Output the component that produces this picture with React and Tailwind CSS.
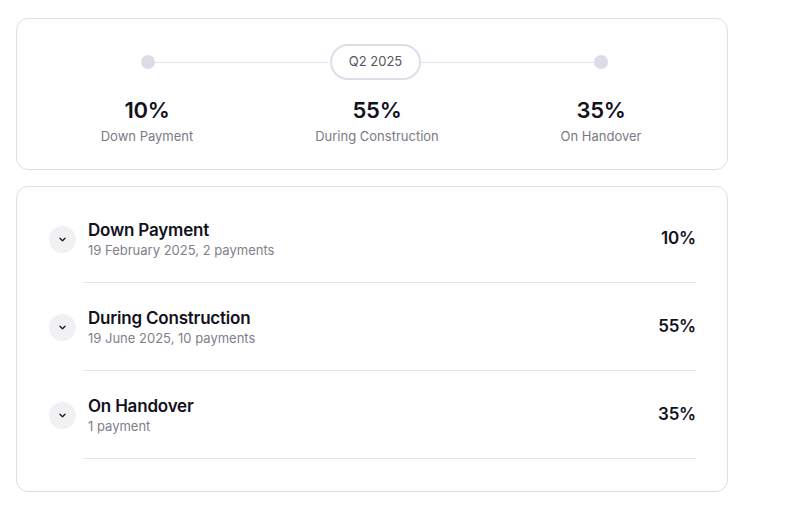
import React from 'react';

const SUMMARY = [
  { pct: '10%', label: 'Down Payment', pad: 'pl-[2px]' },
  { pct: '55%', label: 'During Construction', pad: 'pl-[10px]' },
  { pct: '35%', label: 'On Handover', pad: 'pl-[6px]' },
];

const STAGES = [
  { title: 'Down Payment', sub: '19 February 2025, 2 payments', pct: '10%' },
  { title: 'During Construction', sub: '19 June 2025, 10 payments', pct: '55%' },
  { title: 'On Handover', sub: '1 payment', pct: '35%' },
];

function Chevron() {
  return (
    <svg width="7" height="5" viewBox="0 0 7 5" fill="none">
      <path d="M1 1.2l2.5 2.5 2.5-2.5" stroke="#1a1a24" strokeWidth="1.3" strokeLinecap="round" strokeLinejoin="round" />
    </svg>
  );
}

export default function App() {
  return (
    <div className="w-[800px] h-[529px] bg-white pt-[18px] pl-4 font-['Inter',sans-serif] text-[#12121c]">
      <div className="w-[712px] rounded-xl border-[1.5px] border-[#dedde8] pt-[25px] pb-[24px]">
        <div className="flex items-center pl-[124px] pr-[119px]">
          <div className="w-[14px] h-[14px] rounded-full bg-[#dcdbe8]" />
          <div className="flex-1 h-px bg-[#e3e2ec]" />
          <div className="h-9 w-[91px] ml-[2px] rounded-full border-2 border-[#dedde8] flex items-center justify-center text-[13px] text-[#55555f]">
            Q2 2025
          </div>
          <div className="flex-1 h-px bg-[#e3e2ec]" />
          <div className="w-[14px] h-[14px] rounded-full bg-[#dcdbe8]" />
        </div>
        <div className="grid grid-cols-3 px-4 mt-[16px]">
          {SUMMARY.map(s => (
            <div key={s.label} className={`flex flex-col items-center ${s.pad}`}>
              <span className="text-[22px] leading-[28px] font-semibold tracking-[-0.3px]">{s.pct}</span>
              <span className="text-[13px] leading-[18px] text-[#7a7a84] mt-[3px]">{s.label}</span>
            </div>
          ))}
        </div>
      </div>

      <div className="w-[712px] mt-[16px] rounded-xl border-[1.5px] border-[#dedde8] pt-[8px] pb-[32px] pl-[32px] pr-[31px]">
        {STAGES.map(s => (
          <div key={s.title} className="flex items-center">
            <div className="w-[27px] h-[27px] rounded-full bg-[#f1f1f4] flex items-center justify-center shrink-0">
              <Chevron />
            </div>
            <div className="flex-1 ml-[8px] border-b border-[#e3e2ec] pt-6 pb-[23px] flex items-center justify-between">
              <div className="pl-[4px]">
                <div className="text-[17px] leading-[22px] font-semibold tracking-[-0.2px]">{s.title}</div>
                <div className="text-[13px] leading-[18px] text-[#80808a]">{s.sub}</div>
              </div>
              <div className="text-[17px] font-semibold tracking-[-0.2px]">{s.pct}</div>
            </div>
          </div>
        ))}
      </div>
    </div>
  );
}
